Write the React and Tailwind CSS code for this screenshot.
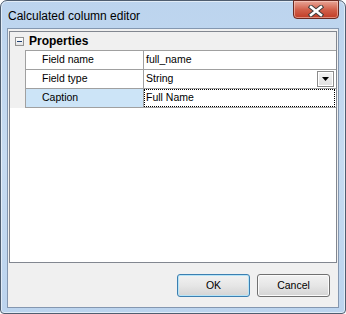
import React from 'react';

const rows = [
  { label: 'Field name', value: 'full_name' },
  { label: 'Field type', value: 'String', dropdown: true },
  { label: 'Caption', value: 'Full Name', selected: true },
];

const CloseGlyph = () => (
  <svg width="16" height="12" viewBox="0 0 16 12" className="block">
    <path d="M3 2 L13 10 M13 2 L3 10" stroke="#3a3a3a" strokeWidth="4.4" strokeLinecap="square" fill="none" />
    <path d="M3 2 L13 10 M13 2 L3 10" stroke="#ffffff" strokeWidth="2.6" strokeLinecap="square" fill="none" />
  </svg>
);

const PropRow = ({ label, value, dropdown, selected }) => (
  <div className="flex h-[19px] border-b border-[#a0a0a0]">
    <div className={`w-[118px] shrink-0 border-r border-[#a0a0a0] pl-[16px] flex items-center ${selected ? 'bg-[#cce4f7]' : 'bg-white'}`}>
      {label}
    </div>
    <div className="flex-1 bg-white flex items-center relative">
      {selected ? (
        <div className="flex-1 h-full border border-dotted border-black pl-[1px] flex items-center mr-[1px]">{value}</div>
      ) : (
        <span className="pl-[2px] flex-1">{value}</span>
      )}
      {dropdown && (
        <div className="w-[17px] h-[16px] mr-[2px] border border-[#8c8c8c] bg-gradient-to-b from-[#f4f4f4] to-[#e0e0e0] shadow-[inset_0_0_0_1px_#ffffff] flex items-center justify-center">
          <svg width="7" height="4" viewBox="0 0 7 4"><path d="M0 0 H7 L3.5 4 Z" fill="#000" /></svg>
        </div>
      )}
    </div>
  </div>
);

const WinButton = ({ children, primary }) => (
  <button
    className={`w-[73px] h-[23px] rounded-[3px] border text-[10.5px] text-black bg-gradient-to-b from-[#f2f2f2] via-[#e6e6e6] to-[#d4d4d4] ${
      primary ? 'border-[#3c7fb1] shadow-[inset_0_0_0_1px_#b6e4f7]' : 'border-[#707070] shadow-[inset_0_0_0_1px_#fbfbfb]'
    }`}
  >
    {children}
  </button>
);

export default function App() {
  return (
    <div className="w-[346px] h-[314px] relative rounded-t-[7px] rounded-b-[4px] border border-[#4f5e70] bg-gradient-to-b from-[#bcd4ee] via-[#c6dbf1] to-[#bcd4ee] shadow-[inset_0_0_0_1px_rgba(255,255,255,0.55)] flex flex-col px-[6px] pb-[5px] font-['Liberation_Sans',Arial,sans-serif] text-black">
      {/* title */}
      <div className="h-[27px] shrink-0 pl-[1px] pt-[8px] text-[12px] leading-[14px]">Calculated column editor</div>
      <div className="absolute left-[292px] top-[-1px] w-[46px] h-[19px] rounded-b-[4px] border border-[#6a2a22] bg-gradient-to-b from-[#e8a597] via-[#d2614c] to-[#c13b24] shadow-[inset_0_0_0_1px_rgba(255,220,210,0.5)] flex items-center justify-center pt-[2px]">
        <CloseGlyph />
      </div>

      {/* client */}
      <div className="flex-1 border border-[#8497b0] bg-[#f0f0f0] flex flex-col px-[1px] pt-[2px]">
        <div className="h-[232px] border border-[#828790] bg-white flex flex-col text-[10.5px]">
          <div className="h-[18px] bg-[#f0f0f0] flex items-center">
            <div className="ml-[5px] w-[9px] h-[9px] border border-[#919191] bg-gradient-to-b from-white to-[#e4e4e4] flex items-center justify-center">
              <div className="w-[5px] h-[1px] bg-[#1e3f73]" />
            </div>
            <span className="ml-[5px] text-[12px] font-bold">Properties</span>
          </div>
          <div className="flex">
            <div className="w-[15px] shrink-0 bg-[#f0f0f0]" />
            <div className="flex-1 border-l border-t border-[#a0a0a0] flex flex-col">
              {rows.map((r) => (
                <PropRow key={r.label} {...r} />
              ))}
            </div>
          </div>
          <div className="flex-1 bg-white" />
        </div>
        <div className="flex-1 flex justify-end items-start pt-[11px] pr-[7px] gap-[7px]">
          <WinButton primary>OK</WinButton>
          <WinButton>Cancel</WinButton>
        </div>
      </div>
    </div>
  );
}
